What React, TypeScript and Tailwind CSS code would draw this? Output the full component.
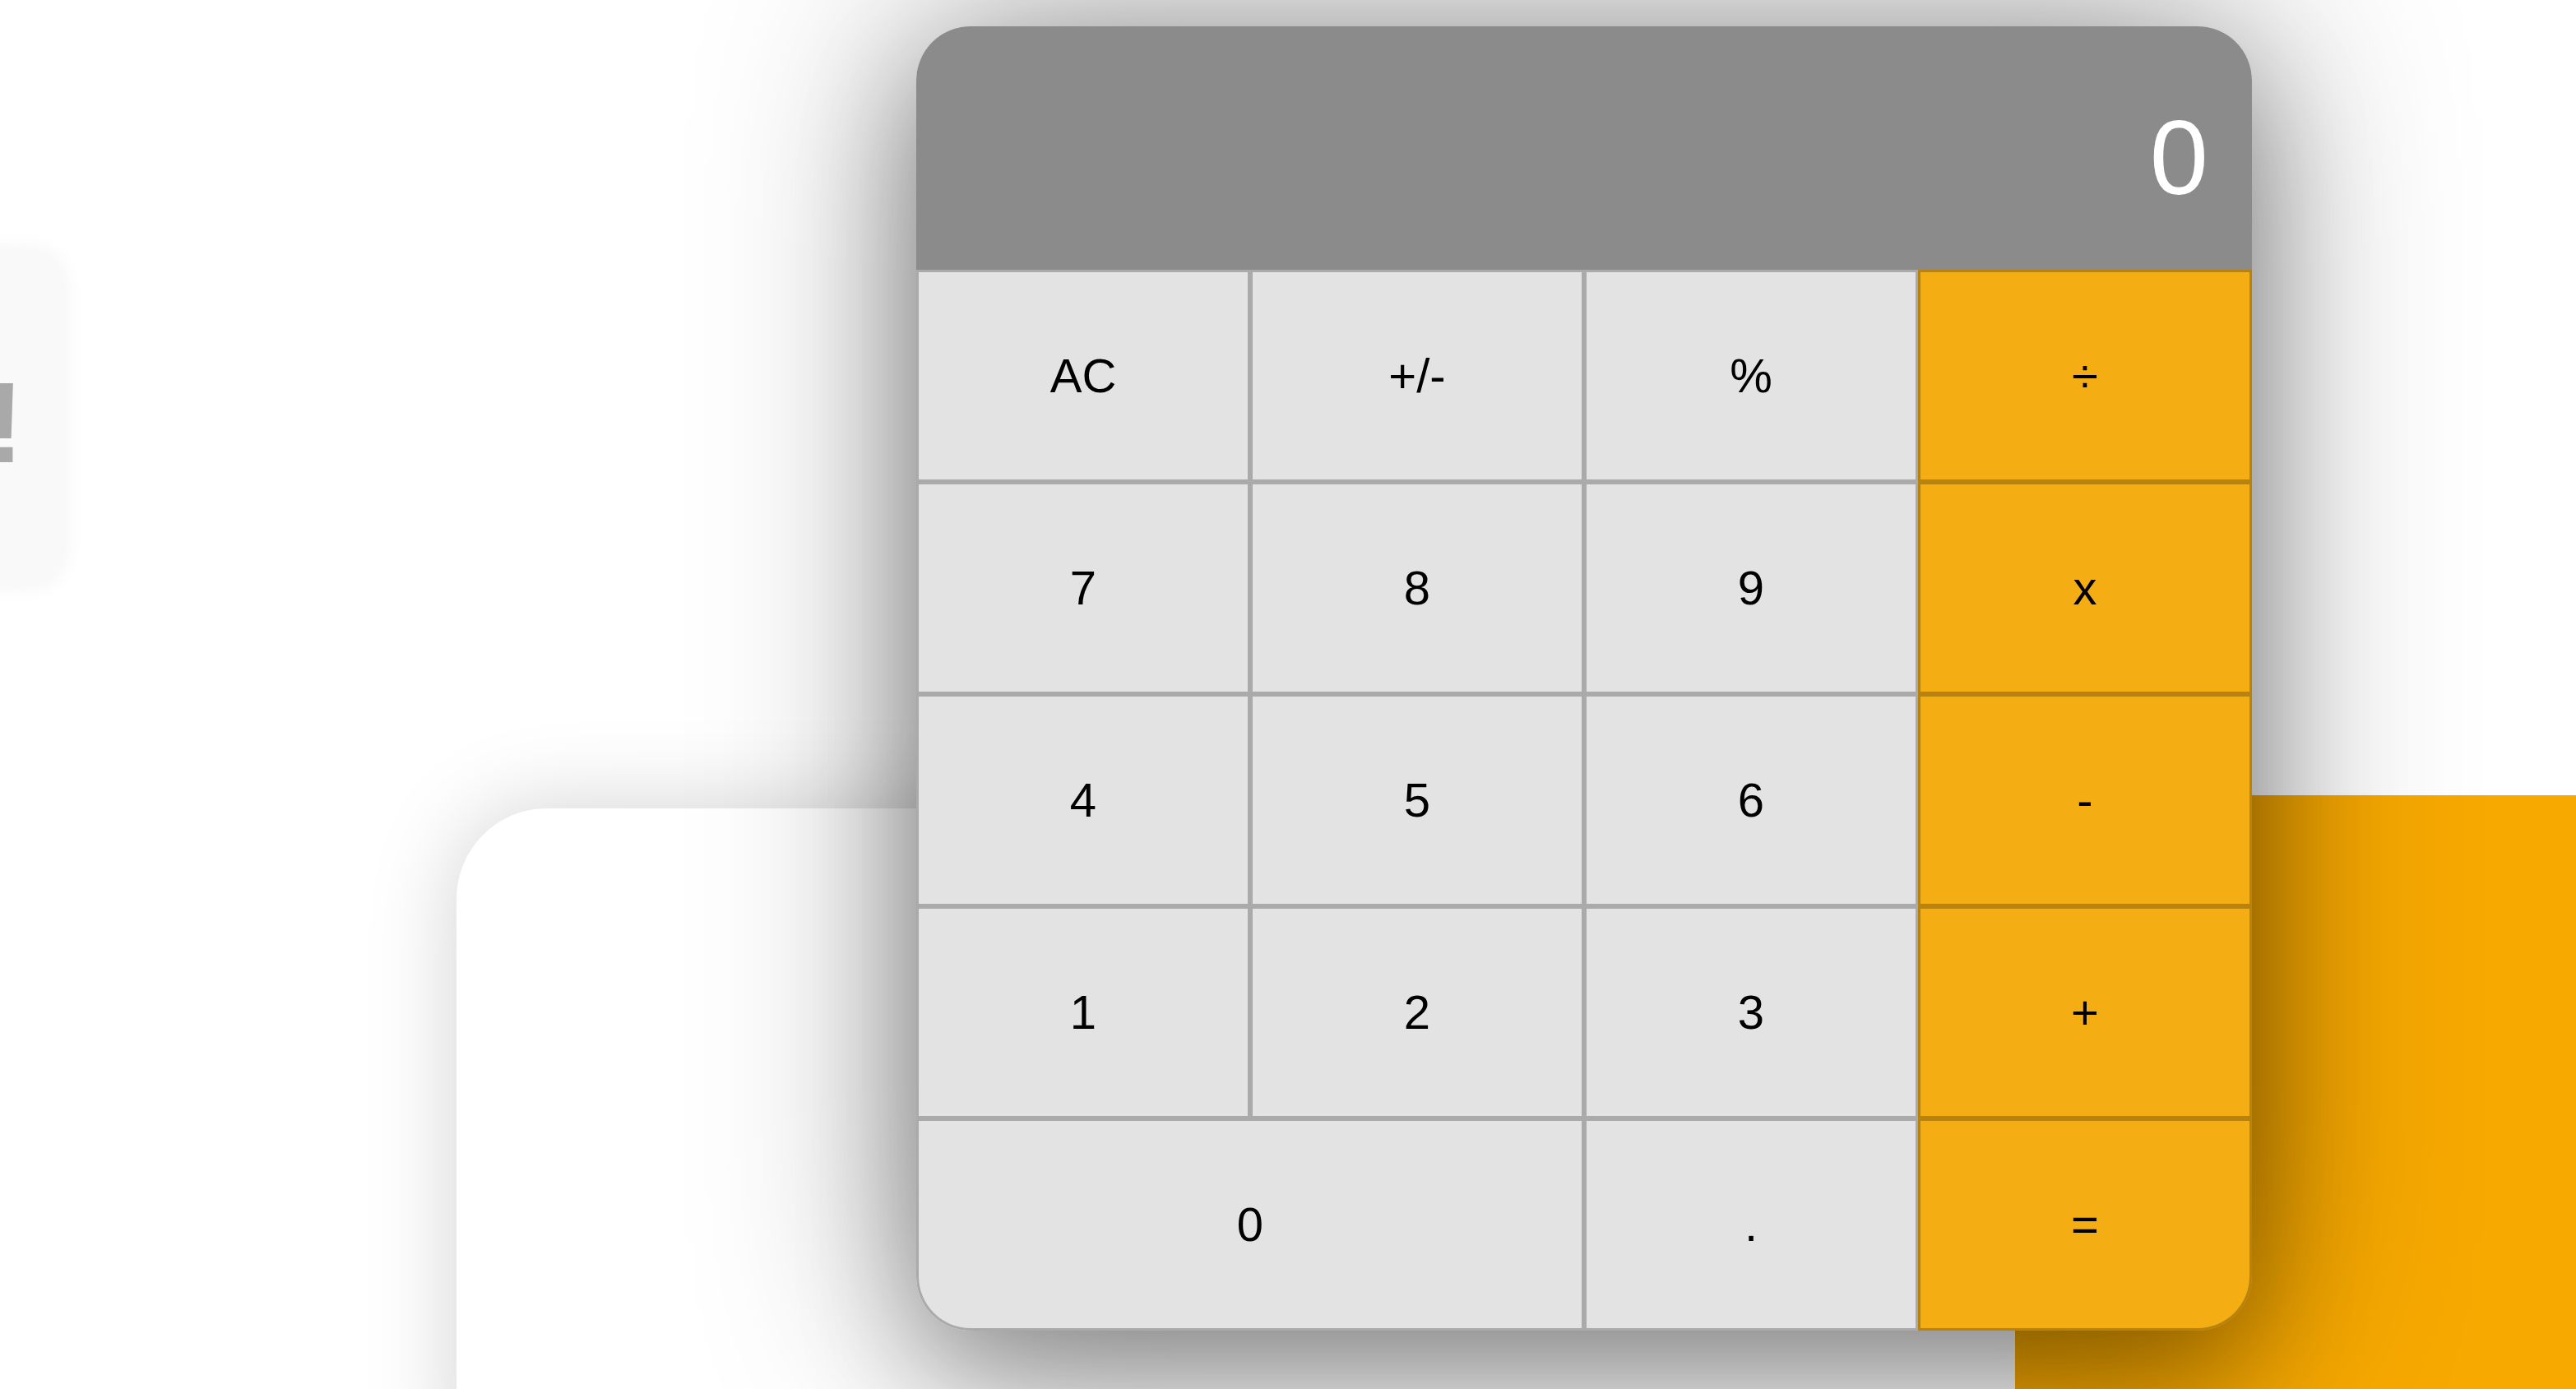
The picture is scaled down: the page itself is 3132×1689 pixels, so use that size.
import React from "react";

type Key = { label: string; op?: boolean; wide?: boolean; corner?: "bl" | "br" };

const keys: Key[] = [
  { label: "AC" },
  { label: "+/-" },
  { label: "%" },
  { label: "÷", op: true },
  { label: "7" },
  { label: "8" },
  { label: "9" },
  { label: "x", op: true },
  { label: "4" },
  { label: "5" },
  { label: "6" },
  { label: "-", op: true },
  { label: "1" },
  { label: "2" },
  { label: "3" },
  { label: "+", op: true },
  { label: "0", wide: true, corner: "bl" },
  { label: "." },
  { label: "=", op: true, corner: "br" },
];

function CalcKey({ k }: { k: Key }) {
  const base =
    "flex h-[258px] items-center justify-center border-[3px] border-black/25 text-[58px] leading-none text-black";
  const color = k.op ? "bg-[#f4ae13]" : "bg-[#e3e3e3]";
  const span = k.wide ? "col-span-2" : "";
  const corner =
    k.corner === "bl" ? "rounded-bl-[66px]" : k.corner === "br" ? "rounded-br-[66px]" : "";
  return (
    <button type="button" className={`${base} ${color} ${span} ${corner}`}>
      {k.label}
    </button>
  );
}

export default function App() {
  return (
    <div
      className="relative h-[1689px] w-[3132px] overflow-hidden bg-white"
      style={{ fontFamily: '"Liberation Sans", Arial, sans-serif' }}
    >
      {/* left partial card */}
      <div className="ml-[-300px] mt-[306px] flex h-[404px] w-[376px] items-center justify-end rounded-[36px] bg-[#f9f9f9] pr-[47px] pt-[12px] shadow-[0_0_30px_rgba(0,0,0,0.06)]">
        <span className="text-[140px] font-bold leading-none text-[#a9a9a9]">!</span>
      </div>

      {/* bottom row: white card + orange block */}
      <div className="mt-[257px] flex items-start">
        <div className="ml-[555px] mt-[16px] h-[800px] w-[1895px] shrink-0 rounded-tl-[110px] bg-white shadow-[0_0_110px_rgba(0,0,0,0.18)]" />
        <div className="h-[800px] w-[800px] shrink-0 bg-[#f7a900]" />
      </div>

      {/* calculator */}
      <div className="absolute left-[1114px] top-[32px] w-[1624px] rounded-[66px] shadow-[0_0_260px_rgba(0,0,0,0.42),0_60px_140px_rgba(0,0,0,0.28)]">
        <div className="flex h-[296px] items-center justify-end rounded-t-[66px] bg-[#8b8b8b] pr-[53px] pt-[24px] text-[128px] leading-none text-white">
          0
        </div>
        <div className="grid grid-cols-4">
          {keys.map((k) => (
            <CalcKey key={k.label} k={k} />
          ))}
        </div>
      </div>
    </div>
  );
}
